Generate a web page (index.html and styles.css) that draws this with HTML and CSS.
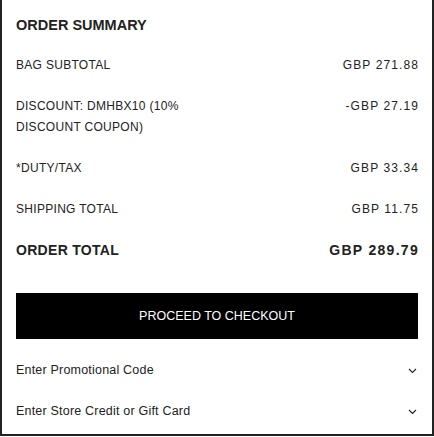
FILE: index.html
```html
<!DOCTYPE html>
<html lang="en">
<head>
    <meta charset="UTF-8">
    <meta name="viewport" content="width=device-width, initial-scale=1.0">
    <title>Order Summary</title>
    <link rel="stylesheet" href="styles.css">
</head>
<body>
    <div class="summary">
        <h2 class="summary-title">ORDER SUMMARY</h2>
        <div class="row">
            <span class="label">BAG SUBTOTAL</span>
            <span class="value">GBP 271.88</span>
        </div>
        <div class="row">
            <span class="label">DISCOUNT: DMHBX10 (10% DISCOUNT COUPON)</span>
            <span class="value">-GBP 27.19</span>
        </div>
        <div class="row">
            <span class="label">*DUTY/TAX</span>
            <span class="value">GBP 33.34</span>
        </div>
        <div class="row">
            <span class="label">SHIPPING TOTAL</span>
            <span class="value">GBP 11.75</span>
        </div>
        <div class="row total">
            <span class="label">ORDER TOTAL</span>
            <span class="value">GBP 289.79</span>
        </div>
        <button class="checkout">PROCEED TO CHECKOUT</button>
        <div class="toggle">
            <span>Enter Promotional Code</span>
            <svg width="9" height="6" viewBox="0 0 9 6"><path d="M1 1l3.5 3.5L8 1" fill="none" stroke="#222" stroke-width="1.1"/></svg>
        </div>
        <div class="toggle">
            <span>Enter Store Credit or Gift Card</span>
            <svg width="9" height="6" viewBox="0 0 9 6"><path d="M1 1l3.5 3.5L8 1" fill="none" stroke="#222" stroke-width="1.1"/></svg>
        </div>
    </div>
</body>
</html>
```

FILE: styles.css
```css
body {
    margin: 0;
    font-family: "Liberation Sans", Arial, sans-serif;
    color: #222;
    background-color: #fff;
}
.summary {
    width: 434px;
    box-sizing: border-box;
    border-left: 2px solid #222;
    border-right: 2px solid #222;
    border-bottom: 2px solid #222;
    padding: 15px 14px 2px 14px;
}
.summary-title {
    margin: 0 0 19px;
    font-size: 14.5px;
    line-height: 21px;
    font-weight: bold;
}
.row {
    display: flex;
    justify-content: space-between;
    align-items: flex-start;
    font-size: 12px;
    line-height: 21px;
    letter-spacing: 0.3px;
    margin-bottom: 20px;
}
.row .label {
    flex: 0 1 50%;
}
.row .value {
    letter-spacing: 1.1px;
    margin-right: -1px;
}
.row.total {
    font-size: 14px;
    font-weight: bold;
    margin-bottom: 0;
}
.row.total .value {
    letter-spacing: 1.3px;
}
.checkout {
    display: block;
    width: 100%;
    height: 46px;
    margin: 32px 0 11px;
    border: none;
    background-color: #000;
    color: #fff;
    font-family: inherit;
    font-size: 12.5px;
    cursor: pointer;
}
.toggle {
    display: flex;
    justify-content: space-between;
    align-items: center;
    padding: 10px 1px 10px 0;
    font-size: 12.5px;
    letter-spacing: 0.2px;
    line-height: 21px;
    cursor: pointer;
}
```
